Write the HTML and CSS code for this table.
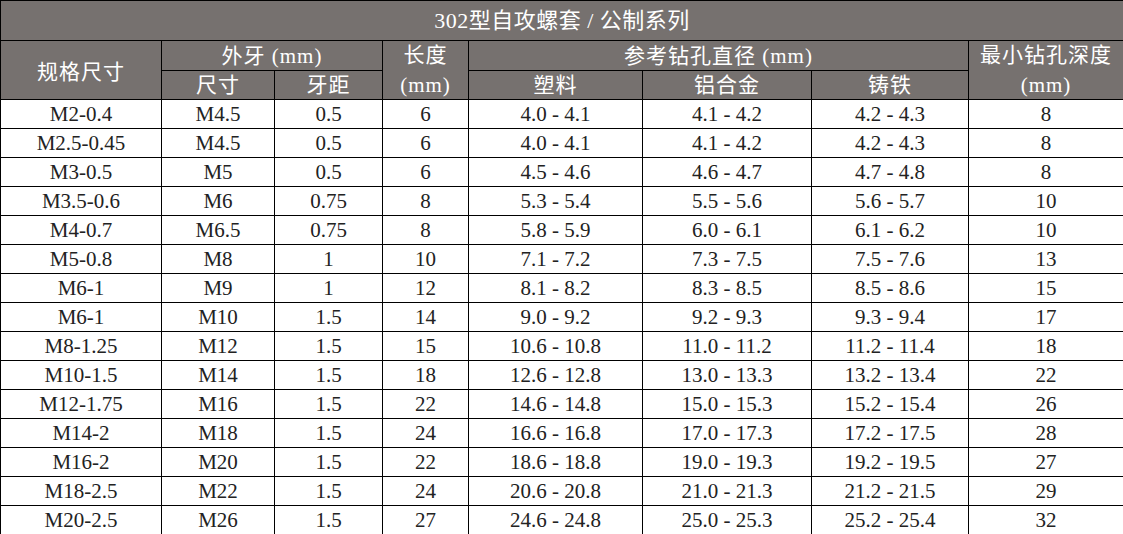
FILE: index.html
```html
<!DOCTYPE html>
<html lang="zh">
<head>
<meta charset="utf-8">
<title>302型自攻螺套 / 公制系列</title>
<link rel="stylesheet" href="styles.css">
</head>
<body>
<table class="spec">
  <colgroup>
    <col class="c1"><col class="c2"><col class="c3"><col class="c4"><col class="c5"><col class="c6"><col class="c7"><col class="c8">
  </colgroup>
  <thead>
    <tr class="title-row"><th colspan="8" class="title">302型自攻螺套 / 公制系列</th></tr>
    <tr class="h1">
      <th rowspan="2" class="big">规格尺寸</th>
      <th colspan="2">外牙 (mm)</th>
      <th rowspan="2" class="two"><span class="l1">长度</span><span class="l2">(mm)</span></th>
      <th colspan="3">参考钻孔直径 (mm)</th>
      <th rowspan="2" class="two"><span class="l1">最小钻孔深度</span><span class="l2">(mm)</span></th>
    </tr>
    <tr class="h2">
      <th>尺寸</th><th>牙距</th><th>塑料</th><th>铝合金</th><th>铸铁</th>
    </tr>
  </thead>
  <tbody>
    <tr><td>M2-0.4</td><td>M4.5</td><td>0.5</td><td>6</td><td>4.0 - 4.1</td><td>4.1 - 4.2</td><td>4.2 - 4.3</td><td>8</td></tr>
    <tr><td>M2.5-0.45</td><td>M4.5</td><td>0.5</td><td>6</td><td>4.0 - 4.1</td><td>4.1 - 4.2</td><td>4.2 - 4.3</td><td>8</td></tr>
    <tr><td>M3-0.5</td><td>M5</td><td>0.5</td><td>6</td><td>4.5 - 4.6</td><td>4.6 - 4.7</td><td>4.7 - 4.8</td><td>8</td></tr>
    <tr><td>M3.5-0.6</td><td>M6</td><td>0.75</td><td>8</td><td>5.3 - 5.4</td><td>5.5 - 5.6</td><td>5.6 - 5.7</td><td>10</td></tr>
    <tr><td>M4-0.7</td><td>M6.5</td><td>0.75</td><td>8</td><td>5.8 - 5.9</td><td>6.0 - 6.1</td><td>6.1 - 6.2</td><td>10</td></tr>
    <tr><td>M5-0.8</td><td>M8</td><td>1</td><td>10</td><td>7.1 - 7.2</td><td>7.3 - 7.5</td><td>7.5 - 7.6</td><td>13</td></tr>
    <tr><td>M6-1</td><td>M9</td><td>1</td><td>12</td><td>8.1 - 8.2</td><td>8.3 - 8.5</td><td>8.5 - 8.6</td><td>15</td></tr>
    <tr><td>M6-1</td><td>M10</td><td>1.5</td><td>14</td><td>9.0 - 9.2</td><td>9.2 - 9.3</td><td>9.3 - 9.4</td><td>17</td></tr>
    <tr><td>M8-1.25</td><td>M12</td><td>1.5</td><td>15</td><td>10.6 - 10.8</td><td>11.0 - 11.2</td><td>11.2 - 11.4</td><td>18</td></tr>
    <tr><td>M10-1.5</td><td>M14</td><td>1.5</td><td>18</td><td>12.6 - 12.8</td><td>13.0 - 13.3</td><td>13.2 - 13.4</td><td>22</td></tr>
    <tr><td>M12-1.75</td><td>M16</td><td>1.5</td><td>22</td><td>14.6 - 14.8</td><td>15.0 - 15.3</td><td>15.2 - 15.4</td><td>26</td></tr>
    <tr><td>M14-2</td><td>M18</td><td>1.5</td><td>24</td><td>16.6 - 16.8</td><td>17.0 - 17.3</td><td>17.2 - 17.5</td><td>28</td></tr>
    <tr><td>M16-2</td><td>M20</td><td>1.5</td><td>22</td><td>18.6 - 18.8</td><td>19.0 - 19.3</td><td>19.2 - 19.5</td><td>27</td></tr>
    <tr><td>M18-2.5</td><td>M22</td><td>1.5</td><td>24</td><td>20.6 - 20.8</td><td>21.0 - 21.3</td><td>21.2 - 21.5</td><td>29</td></tr>
    <tr><td>M20-2.5</td><td>M26</td><td>1.5</td><td>27</td><td>24.6 - 24.8</td><td>25.0 - 25.3</td><td>25.2 - 25.4</td><td>32</td></tr>
  </tbody>
</table>
</body>
</html>
```

FILE: styles.css
```css
html, body {
  margin: 0;
  padding: 0;
  background: #ffffff;
}

.spec {
  border-collapse: collapse;
  table-layout: fixed;
  width: 1123px;
  font-family: "Liberation Serif", "Noto Sans CJK SC", serif;
  color: #222222;
}

.c1 { width: 161px; }
.c2 { width: 113px; }
.c3 { width: 108px; }
.c4 { width: 86px; }
.c5 { width: 174px; }
.c6 { width: 169px; }
.c7 { width: 157px; }
.c8 { width: 155px; }

.spec th,
.spec td {
  border: 1px solid #000000;
  padding: 0;
  text-align: center;
  overflow: hidden;
  white-space: nowrap;
}

.spec th {
  background: #76716f;
  color: #ffffff;
  font-weight: normal;
  font-size: 21px;
  letter-spacing: 1px;
  height: 28px;
  line-height: 28px;
  vertical-align: bottom;
}

.spec th.title {
  height: 39px;
  line-height: 36px;
  font-size: 22px;
  letter-spacing: 0.5px;
  border-top: 1px solid #000000;
}

.title-row th { vertical-align: middle; }

.spec th.big {
  vertical-align: middle;
  line-height: 30px;
  padding-top: 4px;
}

.spec th.two {
  vertical-align: top;
}

.spec th.two .l1,
.spec th.two .l2 {
  display: block;
  height: 29px;
  line-height: 29px;
}

.spec th.two .l2 {
  line-height: 31px;
}

.spec td {
  font-size: 21px;
  height: 28px;
  line-height: 28px;
  padding-top: 0;
  vertical-align: bottom;
}
```
